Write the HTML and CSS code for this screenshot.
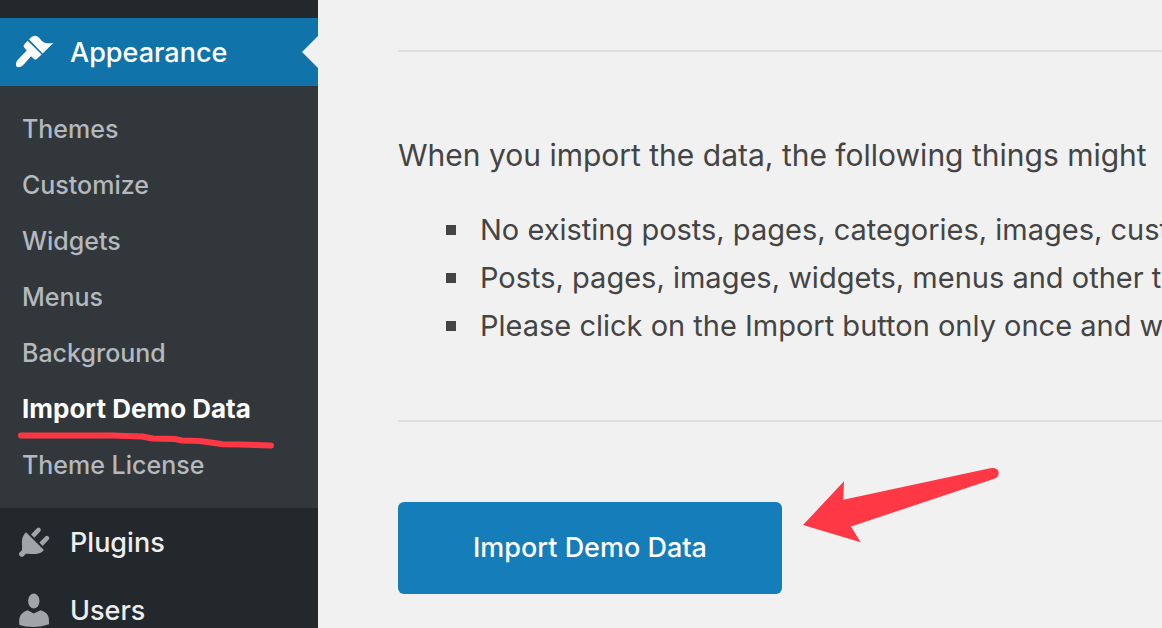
FILE: index.html
```html
<!DOCTYPE html>
<html lang="en">
<head>
    <meta charset="UTF-8">
    <meta name="viewport" content="width=device-width, initial-scale=1.0">
    <title>Import Demo Data</title>
    <link rel="stylesheet" href="styles.css">
</head>
<body>
    <div class="admin">
        <nav class="sidebar">
            <a class="menu-item current" href="#">
                <svg class="menu-icon" viewBox="0 0 40 40">
                    <path d="M15 7.300Q18 3.500 21 3.700C25 4 26 7.500 29 9.800C31.500 11.600 35 11.400 39.300 11L28.700 21.500Z"/>
                    <path d="M13.700 8.700L27.600 22.400L22.700 27Q21.300 28 20 27L17 24.300L9.500 32.700C6.500 35.500 3.500 35.700 2.500 34.500C1.300 33 2 29.500 4.300 27.300L12.700 18.500L10 15.300Q9 14 10 12.700Z"/>
                </svg>
                Appearance
            </a>
            <ul class="submenu">
                <li><a href="#">Themes</a></li>
                <li><a href="#">Customize</a></li>
                <li><a href="#">Widgets</a></li>
                <li><a href="#">Menus</a></li>
                <li><a href="#">Background</a></li>
                <li class="active">
                    <a href="#">Import Demo Data</a>
                    <svg class="underline" viewBox="0 0 280 20">
                        <path d="M21 6.500H113L142 7.500L153 9.500L175 10L182 11.500L200 12L223 15.300L240 15.600L271 16.500"/>
                    </svg>
                </li>
                <li><a href="#">Theme License</a></li>
            </ul>
            <a class="menu-item" href="#">
                <svg class="menu-icon" viewBox="0 0 40 40">
                    <path d="M12 10.300L29.900 28Q28 31 23 31.800C19 32.500 14 31 11.500 32L9.500 34.300A2.800 2.800 0 0 1 5.200 31L8 28C8.600 24 7 18 9 14.500Q10 12 12 10.300Z"/>
                    <path d="M17 12.500L23.200 6A2.300 2.300 0 0 1 26.400 9.200L20.300 15.800ZM25.400 20.600L31.600 14.200A2.300 2.300 0 0 1 34.800 17.400L28.700 23.900Z"/>
                </svg>
                Plugins
            </a>
            <a class="menu-item" href="#">
                <svg class="menu-icon" viewBox="0 0 40 40">
                    <ellipse cx="19.800" cy="11" rx="5.700" ry="7.400"/>
                    <path d="M5.300 34.700C5 29 5.500 26 8 23.500Q10.500 21 13.500 20.300L19.800 23.600L26.500 20.300Q30 21 32.500 23.500C34.800 26 35.200 29 35 34.300Q28 36.900 19.800 36.900Q11 36.900 5.300 34.700Z"/>
                </svg>
                Users
            </a>
        </nav>
        <main class="content">
            <section class="notice">
                <p>When you import the data, the following things might</p>
                <ul>
                    <li>No existing posts, pages, categories, images, cust</li>
                    <li>Posts, pages, images, widgets, menus and other t</li>
                    <li>Please click on the Import button only once and w</li>
                </ul>
            </section>
            <div class="actions">
                <button class="button" type="button">Import Demo Data</button>
                <svg class="arrow" viewBox="0 0 200 80">
                    <path d="M1 59L42 15.300L41.300 33.700L188 2.200Q195 1 196.500 5.500Q197.500 10.500 193 12.500L49 60.500L58.700 76.300Z"/>
                </svg>
            </div>
        </main>
    </div>
</body>
</html>
```
FILE: styles.css
```css
* {
    box-sizing: border-box;
}

body {
    margin: 0;
    background: #f1f1f1;
    color: #444;
    font-family: Inter, "Liberation Sans", sans-serif;
}

ul {
    margin: 0;
    padding: 0;
}

a {
    color: inherit;
    text-decoration: none;
}

.admin {
    display: flex;
    height: 100vh;
    overflow: hidden;
}

.sidebar {
    flex: 0 0 318px;
    padding-top: 18px;
    background: #23282d;
    font-weight: 500;
}

.menu-item {
    display: flex;
    align-items: center;
    gap: 16px;
    height: 68px;
    padding-left: 14px;
    color: #eee;
    font-size: 27px;
}

.menu-icon {
    width: 40px;
    height: 40px;
    fill: #a0a5aa;
}

.current {
    position: relative;
    background: #1073aa;
    color: #fff;
}

.current .menu-icon {
    fill: #fff;
}

.current::after {
    content: '';
    position: absolute;
    right: 0;
    top: 18px;
    border: 16px solid transparent;
    border-left: none;
    border-right-color: #f1f1f1;
}

.submenu {
    padding: 15px 0;
    background: #32373c;
    color: #b4b9be;
    font-size: 25px;
    list-style: none;
}

.submenu a {
    display: block;
    padding-left: 22px;
    line-height: 56px;
}

.active {
    position: relative;
    color: #fff;
    font-size: 26px;
    font-weight: 700;
}

.underline {
    position: absolute;
    left: 0;
    top: 48px;
    width: 280px;
    height: 20px;
    fill: none;
    stroke: #ff3845;
    stroke-width: 6;
    stroke-linecap: round;
    stroke-linejoin: round;
}

.content {
    flex: 1;
    min-width: 0;
    padding: 50px 0 0 80px;
}

.notice {
    padding: 78px 0 70px;
    border-top: 2px solid #ddd;
    border-bottom: 2px solid #ddd;
    white-space: nowrap;
    overflow: hidden;
}

.notice p {
    margin: 0 0 26px;
    font-size: 30px;
    line-height: 50px;
}

.notice ul {
    padding-left: 48px;
    font-size: 29px;
    line-height: 48px;
    list-style: none;
}

.notice li {
    display: flex;
    align-items: center;
    gap: 24px;
}

.notice li::before {
    content: '';
    flex: none;
    width: 10px;
    height: 10px;
    background: #444;
}

.actions {
    position: relative;
    margin-top: 80px;
}

.button {
    padding: 0 75px;
    border: none;
    border-radius: 6px;
    background: #147dba;
    color: #fff;
    font-family: inherit;
    font-size: 27px;
    font-weight: 500;
    line-height: 92px;
}

.arrow {
    position: absolute;
    left: 404px;
    top: -36px;
    width: 200px;
    height: 80px;
    fill: #ff3845;
}
```
